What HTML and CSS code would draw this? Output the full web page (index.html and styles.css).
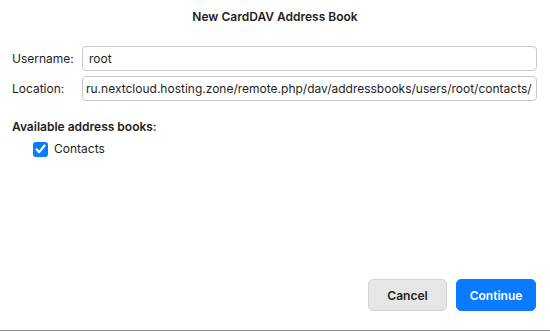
FILE: index.html
```html
<!DOCTYPE html>
<html>
<head>
<meta charset="utf-8">
<link rel="stylesheet" href="styles.css">
</head>
<body>
<div class="dialog">
  <h1 class="title">New CardDAV Address Book</h1>
  <div class="form">
    <label class="label" for="u">Username:</label>
    <div class="field">root</div>
    <label class="label" for="l">Location:</label>
    <div class="field url">ru.nextcloud.hosting.zone/remote.php/dav/addressbooks/users/root/contacts/</div>
  </div>
  <div class="section">Available address books:</div>
  <div class="check-row">
    <span class="checkbox">
      <svg width="11" height="10" viewBox="0 0 10 9"><path d="M1.3 4.8 L3.8 7.4 L8.7 1.3" fill="none" stroke="#fff" stroke-width="1.9" stroke-linecap="round" stroke-linejoin="round"/></svg>
    </span>
    <span class="check-label">Contacts</span>
  </div>
  <div class="spacer"></div>
  <div class="buttons">
    <button class="btn cancel">Cancel</button>
    <button class="btn primary">Continue</button>
  </div>
</div>
</body>
</html>
```
FILE: styles.css
```css
html, body {
  margin: 0;
  padding: 0;
  background: #ffffff;
}
body {
  font-family: Inter, "Noto Sans", "Liberation Sans", sans-serif;
  font-size: 12px;
  color: #1e1e1e;
  width: 550px;
  height: 331px;
  overflow: hidden;
}
.dialog {
  box-sizing: border-box;
  height: 331px;
  display: flex;
  flex-direction: column;
  border-bottom: 1px solid #8a8a8a;
}
.title {
  margin: 0;
  padding-top: 9px;
  font-size: 12px;
  font-weight: 600;
  text-align: center;
  line-height: 16px;
}
.form {
  margin-top: 21px;
  display: grid;
  grid-template-columns: 70px 1fr;
  row-gap: 5px;
  padding-left: 12px;
  padding-right: 13px;
  align-items: center;
}
.label {
  font-size: 12px;
}
.field {
  box-sizing: border-box;
  height: 25px;
  border: 1px solid #c8c8c8;
  border-radius: 4px;
  padding: 0 6px;
  line-height: 23px;
  white-space: nowrap;
  overflow: hidden;
}
.url {
  padding-left: 3px;
}
.section {
  margin-top: 18px;
  padding-left: 12px;
  font-weight: 600;
  line-height: 16px;
}
.check-row {
  margin-top: 6px;
  padding-left: 33px;
  display: flex;
  align-items: center;
  gap: 6px;
}
.checkbox {
  width: 15px;
  height: 15px;
  border-radius: 3px;
  background: #0a7aff;
  display: flex;
  align-items: center;
  justify-content: center;
}
.check-label {
  line-height: 16px;
}
.spacer {
  flex: 1;
}
.buttons {
  display: flex;
  justify-content: flex-end;
  gap: 9px;
  padding-right: 14px;
  margin-bottom: 19px;
}
.btn {
  font-family: inherit;
  font-size: 12px;
  font-weight: 600;
  height: 32px;
  border-radius: 5px;
  padding: 0;
  width: 79px;
}
.cancel {
  background: #e6e6e6;
  border: 1px solid #d4d4d4;
  color: #1e1e1e;
}
.primary {
  width: 80px;
  background: #0a7aff;
  border: 1px solid #0a7aff;
  color: #ffffff;
}
```
